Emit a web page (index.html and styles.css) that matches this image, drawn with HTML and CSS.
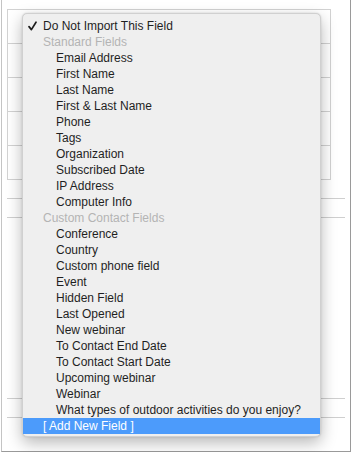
FILE: index.html
```html
<!DOCTYPE html>
<html lang="en">
  <head>
    <meta charset="UTF-8" />
    <meta name="viewport" content="width=device-width, initial-scale=1.0" />
    <title>Field mapping</title>
    <link rel="stylesheet" href="styles.css">
  </head>
  <body>
    <div class="frame">
      <div class="grid-box">
        <div class="grid-row"></div>
        <div class="grid-row"></div>
        <div class="grid-row"></div>
        <div class="grid-row"></div>
        <div class="grid-row"></div>
      </div>
      <div class="rule-pair top-pair"></div>
      <div class="rule-pair bottom-pair"></div>

      <ul class="menu">
        <li class="item checked">
          <svg class="check" width="9" height="10" viewBox="0 0 9 10">
            <path d="M1 5.6 L3.4 8.6 L8 1.2" fill="none" stroke="#1c1c1c" stroke-width="1.7" stroke-linecap="round" stroke-linejoin="round" />
          </svg>
          Do Not Import This Field
        </li>
        <li class="item header">Standard Fields</li>
        <li class="item sub">Email Address</li>
        <li class="item sub">First Name</li>
        <li class="item sub">Last Name</li>
        <li class="item sub">First &amp; Last Name</li>
        <li class="item sub">Phone</li>
        <li class="item sub">Tags</li>
        <li class="item sub">Organization</li>
        <li class="item sub">Subscribed Date</li>
        <li class="item sub">IP Address</li>
        <li class="item sub">Computer Info</li>
        <li class="item header">Custom Contact Fields</li>
        <li class="item sub">Conference</li>
        <li class="item sub">Country</li>
        <li class="item sub">Custom phone field</li>
        <li class="item sub">Event</li>
        <li class="item sub">Hidden Field</li>
        <li class="item sub">Last Opened</li>
        <li class="item sub">New webinar</li>
        <li class="item sub">To Contact End Date</li>
        <li class="item sub">To Contact Start Date</li>
        <li class="item sub">Upcoming webinar</li>
        <li class="item sub">Webinar</li>
        <li class="item sub">What types of outdoor activities do you enjoy?</li>
        <li class="item active">[ Add New Field ]</li>
      </ul>
    </div>
  </body>
</html>
```

FILE: styles.css
```css
* {
  box-sizing: border-box;
  margin: 0;
  padding: 0;
}

body {
  font-family: "Liberation Sans", Arial, sans-serif;
  background: #fff;
}

.frame {
  position: relative;
  width: 350px;
  height: 452px;
  margin-left: 1px;
  padding: 9px 5px 0 5px;
  border-left: 1px solid #c4c4c4;
  border-right: 1px solid #9a9a9a;
  border-bottom: 1px solid #9a9a9a;
}

.grid-box {
  width: 324px;
  border: 1px solid #d2d2d2;
  border-bottom: none;
}

.grid-row {
  height: 34px;
  border-bottom: 1px solid #d2d2d2;
}

.rule-pair {
  height: 20px;
  border-top: 1px solid #cfcfcf;
  border-bottom: 1px solid #cfcfcf;
}

.top-pair {
  margin-top: 18px;
}

.bottom-pair {
  margin-top: 180px;
}

/* popup menu over the table */
.menu {
  position: absolute;
  left: 20px;
  top: 13px;
  width: 299px;
  list-style: none;
  padding: 4px 0 2px;
  background: #efefef;
  border: 1px solid #d0d0d0;
  border-radius: 5px;
  box-shadow: 0 6px 16px rgba(0, 0, 0, 0.28), 0 0 2px rgba(0, 0, 0, 0.15);
}

.item {
  position: relative;
  height: 16px;
  line-height: 16px;
  font-size: 12px;
  color: #1f1f1f;
  padding-left: 20px;
  white-space: nowrap;
}

.item.sub {
  padding-left: 33px;
}

.item.header {
  color: #b4b4b4;
}

.item.active {
  background: #4c9bfb;
  color: #fff;
}

.check {
  position: absolute;
  left: 5px;
  top: 3px;
}
```
